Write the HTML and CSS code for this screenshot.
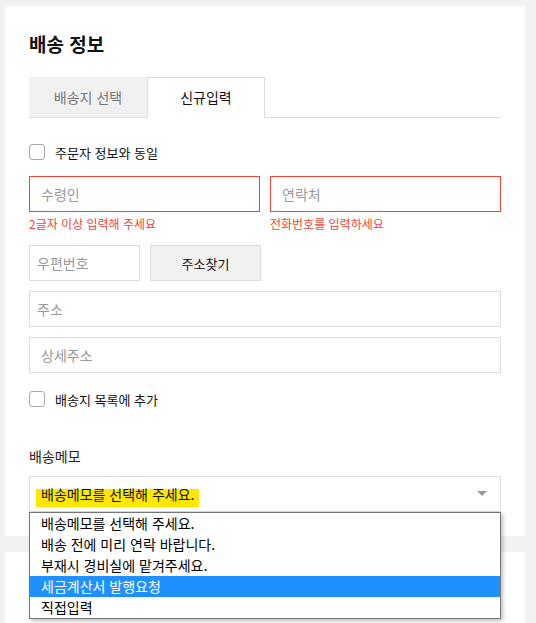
FILE: index.html
```html
<!DOCTYPE html>
<html lang="ko">
<head>
    <meta charset="UTF-8">
    <meta name="viewport" content="width=device-width, initial-scale=1.0">
    <title>배송 정보</title>
    <link rel="stylesheet" href="styles.css">
</head>
<body>
    <div class="page">
        <div class="card">
            <h2 class="title">배송 정보</h2>

            <div class="tabs">
                <div class="tab">배송지 선택</div>
                <div class="tab active">신규입력</div>
            </div>

            <label class="check-row first">
                <input type="checkbox">
                <span>주문자 정보와 동일</span>
            </label>

            <div class="field-row">
                <div class="field">
                    <input type="text" class="input error" placeholder="수령인">
                    <p class="error-msg">2글자 이상 입력해 주세요</p>
                </div>
                <div class="field">
                    <input type="text" class="input error" placeholder="연락처">
                    <p class="error-msg">전화번호를 입력하세요</p>
                </div>
            </div>

            <div class="zip-row">
                <input type="text" class="input zip" placeholder="우편번호">
                <button type="button" class="btn-find">주소찾기</button>
            </div>

            <input type="text" class="input addr" placeholder="주소">
            <input type="text" class="input addr-detail" placeholder="상세주소">

            <label class="check-row second">
                <input type="checkbox">
                <span>배송지 목록에 추가</span>
            </label>

            <div class="memo-label">배송메모</div>
            <div class="select-box">
                <span class="select-text">배송메모를 선택해 주세요.</span>
                <span class="select-arrow"></span>

                <ul class="options">
                    <li>배송메모를 선택해 주세요.</li>
                    <li>배송 전에 미리 연락 바랍니다.</li>
                    <li>부재시 경비실에 맡겨주세요.</li>
                    <li class="selected">세금계산서 발행요청</li>
                    <li>직접입력</li>
                </ul>
            </div>
        </div>

        <div class="card next"></div>
    </div>
</body>
</html>
```

FILE: styles.css
```css
body {
    font-family: "Noto Sans CJK KR", "Noto Sans", sans-serif;
    background-color: #f2f2f2;
    color: #222;
    margin: 0;
    padding: 0;
}
.page {
    padding: 6px 11px 0 5px;
}
.card {
    background-color: #fff;
    padding: 24px 24px 24px;
}
.card.next {
    margin-top: 16px;
    height: 47px;
    padding-bottom: 0;
}
.title {
    margin: 0;
    padding-top: 1px;
    font-size: 19px;
    line-height: 26px;
    font-weight: bold;
    color: #111;
}
.tabs {
    display: flex;
    margin-top: 20px;
    border-bottom: 1px solid #ddd;
}
.tab {
    width: 25%;
    height: 40px;
    line-height: 40px;
    text-align: center;
    font-size: 14px;
    color: #777;
    background-color: #f1f1f1;
    box-sizing: border-box;
}
.tab.active {
    height: 41px;
    margin-bottom: -1px;
    color: #111;
    background-color: #fff;
    border: 1px solid #ddd;
    border-bottom: none;
    line-height: 38px;
}
.check-row {
    display: flex;
    align-items: center;
    gap: 10px;
    height: 16px;
    font-size: 13px;
    color: #111;
}
.check-row.first {
    margin-top: 26px;
}
.check-row.second {
    margin-top: 18px;
}
.check-row input {
    appearance: none;
    margin: 0;
    width: 16px;
    height: 16px;
    border: 1px solid #aaa;
    border-radius: 3px;
    background-color: #fff;
}
.field-row {
    display: grid;
    grid-template-columns: 1fr 1fr;
    column-gap: 10px;
    margin-top: 16px;
}
.input {
    display: block;
    width: 100%;
    height: 36px;
    box-sizing: border-box;
    border: 1px solid #ddd;
    border-radius: 0;
    padding: 0 11px;
    font-family: inherit;
    font-size: 14px;
    color: #222;
    outline: none;
}
.input::placeholder {
    color: #999;
}
.input.error {
    border-color: #f44336;
}
.error-msg {
    margin: 4px 0 0;
    font-size: 12px;
    line-height: 16px;
    color: #f44336;
}
.zip-row {
    display: flex;
    gap: 10px;
    margin-top: 13px;
}
.input.zip {
    width: 111px;
    padding: 0 7px;
}
.btn-find {
    width: 111px;
    height: 36px;
    background-color: #f1f1f1;
    border: 1px solid #ddd;
    font-family: inherit;
    font-size: 13px;
    color: #111;
    cursor: pointer;
}
.input.addr {
    margin-top: 10px;
    padding: 0 7px;
}
.input.addr-detail {
    margin-top: 10px;
}
.memo-label {
    margin-top: 39px;
    font-size: 14px;
    line-height: 20px;
    color: #222;
}
.select-box {
    position: relative;
    display: flex;
    margin-top: 10px;
    height: 36px;
    box-sizing: border-box;
    border: 1px solid #ddd;
    padding: 0 13px 0 6px;
}
.select-text {
    align-self: flex-start;
    margin-top: 8px;
    padding: 0 5px 4px;
    font-size: 14px;
    line-height: 18px;
    color: #111;
    background: linear-gradient(to bottom, transparent 4px, #ffe800 4px);
}
.select-arrow {
    align-self: flex-start;
    margin: 14px 0 0 auto;
    width: 0;
    height: 0;
    border-left: 5px solid transparent;
    border-right: 5px solid transparent;
    border-top: 5px solid #999;
}
.options {
    position: absolute;
    top: 35px;
    left: -1px;
    right: -1px;
    z-index: 2;
    margin: 0;
    padding: 0;
    list-style: none;
    background-color: #fff;
    border: 1px solid #767676;
    box-shadow: 2px 2px 4px rgba(0, 0, 0, 0.25);
}
.options li {
    height: 21px;
    line-height: 21px;
    padding-left: 11px;
    font-size: 14px;
    color: #000;
}
.options li.selected {
    background-color: #1e90ff;
    color: #fff;
}
```
